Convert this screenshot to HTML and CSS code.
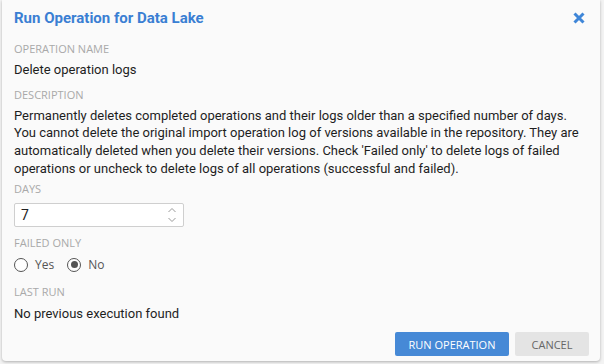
FILE: index.html
```html
<!DOCTYPE html>
<html>
<head>
<meta charset="utf-8">
<link rel="stylesheet" href="styles.css">
</head>
<body>
<div class="dialog">
  <div class="header">
    <h1 class="title">Run Operation for Data Lake</h1>
    <svg class="close" width="12" height="12" viewBox="0 0 12 12"><path d="M1.5 1.5 L10.5 10.5 M10.5 1.5 L1.5 10.5" stroke="#3f86d8" stroke-width="3" stroke-linecap="butt"/></svg>
  </div>
  <div class="content">
    <div class="label first">OPERATION NAME</div>
    <div class="value">Delete operation logs</div>
    <div class="label sec">DESCRIPTION</div>
    <div class="value desc">Permanently deletes completed operations and their logs older than a specified number of days. You cannot delete the original import operation log of versions available in the repository. They are automatically deleted when you delete their versions. Check 'Failed only' to delete logs of failed operations or uncheck to delete logs of all operations (successful and failed).</div>
    <div class="label days">DAYS</div>
    <div class="input">
      <span class="input-text">7</span>
      <svg class="spin" width="10" height="18" viewBox="0 0 10 18"><path d="M1.5 6 L5 2.5 L8.5 6 M1.5 12 L5 15.5 L8.5 12" fill="none" stroke="#9a9a9a" stroke-width="1"/></svg>
    </div>
    <div class="label failed">FAILED ONLY</div>
    <div class="radios">
      <span class="radio"><span class="circle"></span>Yes</span>
      <span class="radio"><span class="circle checked"></span>No</span>
    </div>
    <div class="label last">LAST RUN</div>
    <div class="value lastval">No previous execution found</div>
  </div>
  <div class="footer">
    <button class="btn primary">RUN OPERATION</button>
    <button class="btn secondary">CANCEL</button>
  </div>
</div>
</body>
</html>
```
FILE: styles.css
```css
html, body { margin: 0; padding: 0; background: #f3f3f3; }
body { width: 604px; height: 364px; overflow: hidden; font-family: Roboto, "Liberation Sans", Arial, sans-serif; }
.dialog {
  box-sizing: border-box;
  margin: 0 4px 0 2px;
  width: 598px;
  height: 361px;
  background: #fafafa;
  border-radius: 0 0 4px 4px;
  box-shadow: 0 1px 3px rgba(0,0,0,0.28);
  display: flex;
  flex-direction: column;
  padding: 0 11px 0 12px;
}
.header { display: flex; align-items: center; justify-content: space-between; height: 34px; padding-top: 1px; }
.title { margin: 0; font-size: 15px; font-weight: 700; color: #3a7fd3; letter-spacing: 0; }
.close { margin-right: 4px; }
.content { flex: 1; }
.label {
  font-family: "Open Sans", sans-serif;
  font-size: 11px;
  color: #a9a9a9;
  line-height: 14px;
  margin-top: 7px;
}
.label.sec { margin-top: 9px; }
.label.days { margin-top: 4px; }
.label.failed { margin-top: 9px; }
.label.last { margin-top: 11px; }
.value { font-size: 13px; color: #1e1e1e; line-height: 17.5px; margin-top: 5px; }
.desc { margin-top: 5px; line-height: 17.8px; }
.lastval { margin-top: 6px; }
.input {
  box-sizing: border-box;
  margin-top: 7px;
  width: 170px;
  height: 24px;
  border: 1px solid #cfcfcf;
  border-radius: 2px;
  background: #fff;
  display: flex;
  align-items: center;
  justify-content: space-between;
  padding: 0 6px 0 6px;
}
.input-text { font-size: 14px; color: #222; }
.spin { display: block; }
.radios { display: flex; gap: 13px; margin-top: 6px; height: 18px; align-items: center; }
.radio { display: flex; align-items: center; font-family: "Open Sans", sans-serif; font-size: 12px; color: #555; gap: 7px; }
.circle {
  box-sizing: border-box;
  width: 14px; height: 14px; border-radius: 50%;
  border: 1.5px solid #555;
  display: flex; align-items: center; justify-content: center;
  background: #fff;
}
.circle.checked::after { content: ""; width: 7px; height: 7px; border-radius: 50%; background: #555; }
.footer { display: flex; justify-content: flex-end; gap: 6px; padding-bottom: 5px; }
.btn {
  height: 24px;
  border: none;
  border-radius: 2px;
  font-family: "Open Sans", sans-serif;
  font-size: 11px;
  padding: 0;
}
.primary { width: 114px; background: #4689d6; color: #fff; }
.secondary { width: 74px; background: #e4e4e4; color: #666; }
```
